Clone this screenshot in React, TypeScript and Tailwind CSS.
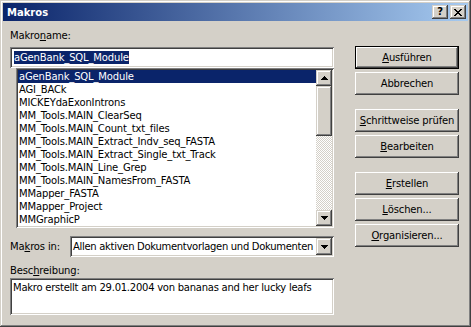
import React from "react";

const raised =
  "shadow-[inset_-1px_-1px_#404040,inset_1px_1px_#ffffff,inset_-2px_-2px_#808080,inset_2px_2px_#d4d0c8]";
const frame =
  "shadow-[inset_-1px_-1px_#404040,inset_1px_1px_#d4d0c8,inset_-2px_-2px_#808080,inset_2px_2px_#ffffff]";
const sunken =
  "shadow-[inset_1px_1px_#808080,inset_-1px_-1px_#ffffff,inset_2px_2px_#404040,inset_-2px_-2px_#d4d0c8]";

const macros = [
  "aGenBank_SQL_Module",
  "AGI_BACk",
  "MICKEYdaExonIntrons",
  "MM_Tools.MAIN_ClearSeq",
  "MM_Tools.MAIN_Count_txt_files",
  "MM_Tools.MAIN_Extract_Indv_seq_FASTA",
  "MM_Tools.MAIN_Extract_Single_txt_Track",
  "MM_Tools.MAIN_Line_Grep",
  "MM_Tools.MAIN_NamesFrom_FASTA",
  "MMapper_FASTA",
  "MMapper_Project",
  "MMGraphicP",
];

// little pixel glyphs, drawn like the classic bitmaps
function Arrow({ down }: { down?: boolean }) {
  const rows = [
    [3, 1],
    [2, 3],
    [1, 5],
    [0, 7],
  ];
  const r = down ? [...rows].reverse() : rows;
  return (
    <svg width="7" height="4" shapeRendering="crispEdges">
      {r.map(([x, w], i) => (
        <rect key={i} x={x} y={i} width={w} height={1} fill="#000" />
      ))}
    </svg>
  );
}

function CloseGlyph() {
  const px = [
    [0, 2, 6, 2],
    [1, 2, 5, 2],
    [2, 4],
    [3, 2],
    [2, 4],
    [1, 2, 5, 2],
    [0, 2, 6, 2],
  ];
  return (
    <svg width="8" height="7" shapeRendering="crispEdges">
      {px.map((row, y) =>
        row.length === 4 ? (
          <g key={y}>
            <rect x={row[0]} y={y} width={row[1]} height={1} fill="#000" />
            <rect x={row[2]} y={y} width={row[3]} height={1} fill="#000" />
          </g>
        ) : (
          <rect key={y} x={row[0]} y={y} width={row[1]} height={1} fill="#000" />
        )
      )}
    </svg>
  );
}

function Btn({
  children,
  isDefault,
  className = "",
}: {
  children: React.ReactNode;
  isDefault?: boolean;
  className?: string;
}) {
  return (
    <div
      className={`h-[23px] w-[104px] flex items-center justify-center whitespace-nowrap bg-[#d4d0c8] ${raised} ${
        isDefault ? "border border-black" : ""
      } ${className}`}
    >
      {children}
    </div>
  );
}

const U = ({ children }: { children: React.ReactNode }) => (
  <span className="underline underline-offset-[1px]">{children}</span>
);

export default function App() {
  return (
    <div
      className={`w-[471px] h-[327px] bg-[#d4d0c8] p-[3px] flex flex-col font-['DejaVu_Sans',sans-serif] text-[10px] tracking-[-0.15px] text-black ${frame}`}
    >
      {/* title bar */}
      <div className="h-[18px] flex items-center bg-[linear-gradient(to_right,#0a246a,#a6caf0)] pl-[4px] pr-[2px]">
        <span className="flex-1 font-bold text-white tracking-normal">Makros</span>
        <div className={`w-[16px] h-[14px] bg-[#d4d0c8] flex items-center justify-center font-bold text-[10px] leading-none ${frame}`}>
          ?
        </div>
        <div className={`ml-[2px] w-[16px] h-[14px] bg-[#d4d0c8] flex items-center justify-center ${frame}`}>
          <CloseGlyph />
        </div>
      </div>

      <div className="flex pl-[7px]">
        {/* left column */}
        <div className="w-[324px] flex flex-col pt-[8px]">
          <div className="h-[13px] leading-[13px]">
            Makro<U>n</U>ame:
          </div>
          <div className={`mt-[5px] h-[21px] bg-white flex items-center pl-[4px] ${sunken}`}>
            <span className="bg-[#0a246a] text-white leading-[13px]">aGenBank_SQL_Module</span>
          </div>

          <div className={`ml-[6px] w-[318px] h-[160px] bg-white p-[2px] flex ${sunken}`}>
            <div className="flex-1 flex flex-col">
              {macros.map((m, i) => (
                <div
                  key={m}
                  className={`h-[13px] leading-[13px] pl-[1px] whitespace-nowrap ${
                    i === 0 ? "bg-[#0a246a] text-white" : ""
                  }`}
                >
                  {m}
                </div>
              ))}
            </div>
            <div className="w-[16px] flex flex-col">
              <div className={`h-[16px] bg-[#d4d0c8] flex items-center justify-center ${frame}`}>
                <Arrow />
              </div>
              <div className={`h-[50px] bg-[#d4d0c8] ${frame}`} />
              <div className="flex-1 bg-[repeating-conic-gradient(#ffffff_0%_25%,#d4d0c8_0%_50%)] bg-[length:2px_2px]" />
              <div className={`h-[16px] bg-[#d4d0c8] flex items-center justify-center ${frame}`}>
                <Arrow down />
              </div>
            </div>
          </div>

          <div className="mt-[8px] h-[21px] flex items-center">
            <div className="w-[60px] shrink-0 whitespace-nowrap">
              Ma<U>k</U>ros in:
            </div>
            <div className={`flex-1 h-[21px] bg-white p-[2px] flex items-center ${sunken}`}>
              <span className="flex-1 pl-[1px] whitespace-nowrap overflow-hidden tracking-[-0.3px]">
                Allen aktiven Dokumentvorlagen und Dokumenten
              </span>
              <div className={`w-[16px] h-[17px] shrink-0 bg-[#d4d0c8] flex items-center justify-center ${frame}`}>
                <Arrow down />
              </div>
            </div>
          </div>

          <div className="mt-[7px] h-[13px] leading-[13px]">
            Besc<U>h</U>reibung:
          </div>
          <div className={`mt-[1px] h-[37px] bg-white pt-[3px] pl-[3px] leading-[13px] tracking-[-0.25px] ${sunken}`}>
            Makro erstellt am 29.01.2004 von bananas and her lucky leafs
          </div>
        </div>

        {/* right column */}
        <div className="ml-[21px] w-[104px] flex flex-col pt-[25px]">
          <Btn isDefault>
            <U>A</U>usführen
          </Btn>
          <Btn className="mt-[3px]">Abbrechen</Btn>

          <Btn className="mt-[14px]">
            <U>S</U>chrittweise prüfen
          </Btn>
          <Btn className="mt-[3px]">
            <U>B</U>earbeiten
          </Btn>

          <Btn className="mt-[14px]">
            <U>E</U>rstellen
          </Btn>
          <Btn className="mt-[3px]">
            <U>L</U>öschen...
          </Btn>
          <Btn className="mt-[3px]">
            <U>O</U>rganisieren...
          </Btn>
        </div>
      </div>
    </div>
  );
}
